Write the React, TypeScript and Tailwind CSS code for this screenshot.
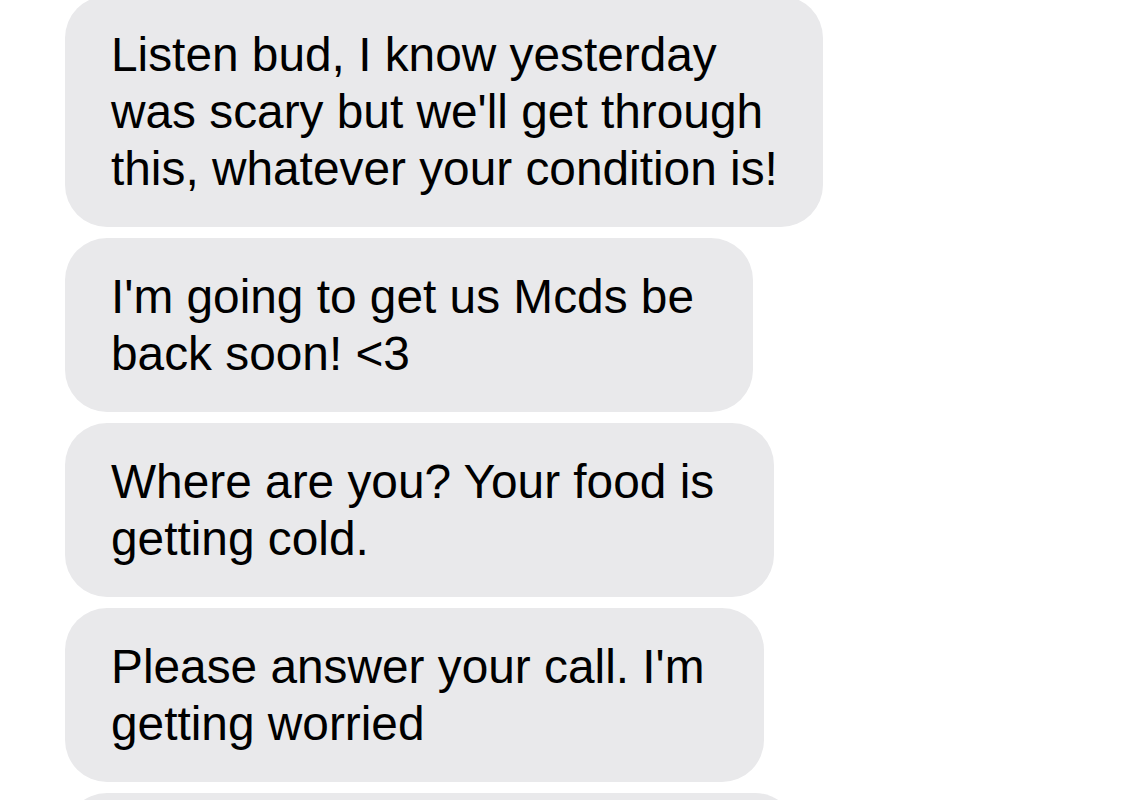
import React from "react";

const bubbles: { text: string; w: string }[] = [
  { text: "Listen bud, I know yesterday was scary but we'll get through this, whatever your condition is!", w: "w-[758px]" },
  { text: "I'm going to get us Mcds be back soon! <3", w: "w-[688px]" },
  { text: "Where are you? Your food is getting cold.", w: "w-[709px]" },
  { text: "Please answer your call. I'm getting worried", w: "w-[699px]" },
  { text: "Hello?", w: "w-[732px]" },
];

export default function App() {
  return (
    <div
      className="w-[1125px] h-[800px] overflow-hidden bg-white"
      style={{ fontFamily: '"Liberation Sans", Arial, sans-serif' }}
    >
      <div className="-mt-1 pl-[65px] flex flex-col items-start gap-[11px]">
        {bubbles.map((b, i) => (
          <div
            key={i}
            className={`${b.w} bg-[#e9e9eb] rounded-[42px] pl-[46px] pr-[40px] py-[30px] text-[47.8px] leading-[57px] text-black`}
          >
            {b.text}
          </div>
        ))}
      </div>
    </div>
  );
}
